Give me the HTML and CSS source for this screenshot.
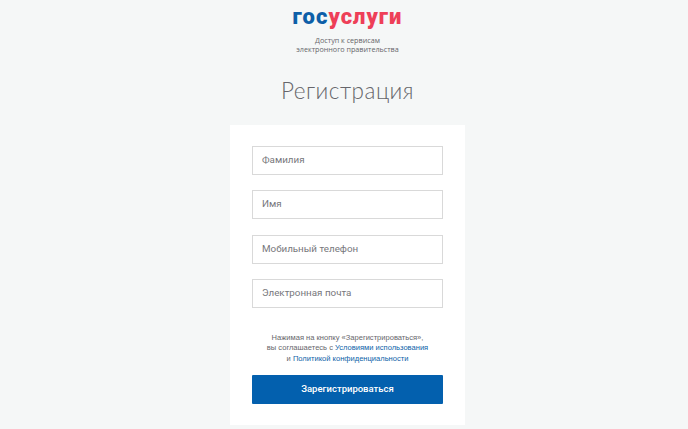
FILE: index.html
```html
<!DOCTYPE html>
<html>

	<head>
		<meta charset="UTF-8">
		<title>Регистрация</title>
		<link rel="stylesheet" href="styles.css">
	</head>

	<body>
		<div class="logo"><span class="logoBlue">гос</span><span class="logoRed">услуги</span></div>
		<div class="slogan">Доступ к сервисам<br>электронного правительства</div>
		<h1 class="title">Регистрация</h1>
		<form class="card">
			<div class="field">Фамилия</div>
			<div class="field">Имя</div>
			<div class="field">Мобильный телефон</div>
			<div class="field">Электронная почта</div>
			<p class="terms">
				Нажимая на кнопку «Зарегистрироваться»,<br>
				вы соглашаетесь с <a href="#">Условиями использования</a><br>
				и <a href="#">Политикой конфиденциальности</a>
			</p>
			<div class="submit">Зарегистрироваться</div>
		</form>
	</body>

</html>
```

FILE: styles.css
```css
html,
body {
	height: 429px;
	overflow: hidden;
}

body {
	box-sizing: border-box;
	margin: 0;
	padding: 0 0 0 7px;
	background: #f5f7f7;
	font-family: "Liberation Sans", Arial, sans-serif;
	display: flex;
	flex-direction: column;
	align-items: center;
}

.logo {
	margin-top: 2px;
	height: 30px;
	font-family: Roboto, sans-serif;
	font-size: 22px;
	font-weight: 900;
	line-height: 30px;
	letter-spacing: 1px;
}

.logoBlue {
	color: #0d5fa8;
}

.logoRed {
	color: #ee3f58;
}

.slogan {
	margin-top: 4px;
	font-family: "Open Sans", sans-serif;
	font-size: 7.2px;
	line-height: 8.5px;
	color: #66666b;
	text-align: center;
}

.title {
	margin: 21px 0 0;
	height: 51px;
	font-family: Lato, sans-serif;
	font-size: 22.5px;
	font-weight: 300;
	line-height: 34px;
	letter-spacing: 0.5px;
	color: #66666b;
}

.card {
	box-sizing: border-box;
	width: 235px;
	height: 300px;
	padding: 21px 22px 0;
	background: #fff;
	display: flex;
	flex-direction: column;
}

.field {
	box-sizing: border-box;
	height: 29px;
	margin-bottom: 15.3px;
	padding-left: 9px;
	border: 1px solid #d9d9d9;
	font-family: Roboto, sans-serif;
	font-size: 9.8px;
	line-height: 25px;
	color: #77777c;
}

.terms {
	margin: 9.5px 0 0;
	font-size: 7.55px;
	line-height: 10.5px;
	color: #66666b;
	text-align: center;
}

.terms a {
	color: #0d5fa8;
	text-decoration: none;
}

.submit {
	height: 29px;
	margin-top: 10.5px;
	border-radius: 1px;
	background: #0360ae;
	font-family: Roboto, sans-serif;
	font-size: 9.5px;
	font-weight: 500;
	line-height: 27px;
	color: #fff;
	text-align: center;
}
```
